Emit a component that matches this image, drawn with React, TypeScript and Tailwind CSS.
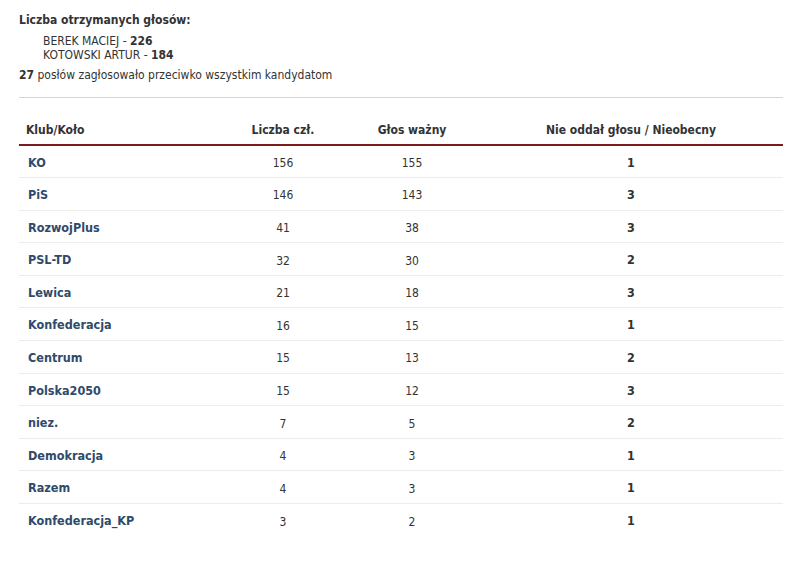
const rows = [
  { club: "KO", members: 156, valid: 155, absent: 1 },
  { club: "PiS", members: 146, valid: 143, absent: 3 },
  { club: "RozwojPlus", members: 41, valid: 38, absent: 3 },
  { club: "PSL-TD", members: 32, valid: 30, absent: 2 },
  { club: "Lewica", members: 21, valid: 18, absent: 3 },
  { club: "Konfederacja", members: 16, valid: 15, absent: 1 },
  { club: "Centrum", members: 15, valid: 13, absent: 2 },
  { club: "Polska2050", members: 15, valid: 12, absent: 3 },
  { club: "niez.", members: 7, valid: 5, absent: 2 },
  { club: "Demokracja", members: 4, valid: 3, absent: 1 },
  { club: "Razem", members: 4, valid: 3, absent: 1 },
  { club: "Konfederacja_KP", members: 3, valid: 2, absent: 1 },
];

export default function App() {
  return (
    <div className="bg-white min-h-[571px] px-[19px] pt-[12px] text-[12px] text-[#333] font-['DejaVu_Sans_Condensed','Liberation_Sans',sans-serif]">
      <div className="font-bold text-[12px] leading-[17px]">Liczba otrzymanych głosów:</div>
      <div className="pl-[24px] pt-[5px] leading-[14px]">
        <div>
          BEREK MACIEJ - <b>226</b>
        </div>
        <div>
          KOTOWSKI ARTUR - <b>184</b>
        </div>
      </div>
      <div className="pt-[6px] leading-[14px]">
        <b>27</b> posłów zagłosowało przeciwko wszystkim kandydatom
      </div>
      <div className="mt-[15px] w-[764px] border-t border-[#d4d4d4]" />
      <table className="mt-[14px] w-[764px] border-collapse">
        <thead>
          <tr className="border-b-2 border-[#7b1c1c] text-[12px] font-bold">
            <th className="w-[202px] h-[33px] pt-[4px] pl-[7px] text-left font-bold">Klub/Koło</th>
            <th className="w-[124px] pt-[4px] font-bold">Liczba czł.</th>
            <th className="w-[134px] pt-[4px] font-bold">Głos ważny</th>
            <th className="pt-[4px] font-bold">Nie oddał głosu / Nieobecny</th>
          </tr>
        </thead>
        <tbody>
          {rows.map((r) => (
            <tr key={r.club} className="border-b border-[#ececec] last:border-b-0">
              <td className="h-[32.6px] pt-[3px] pl-[9px] text-[12.5px] font-bold text-[#2f4a6b]">{r.club}</td>
              <td className="pt-[3px] text-center">{r.members}</td>
              <td className="pt-[3px] text-center">{r.valid}</td>
              <td className="pt-[3px] text-center text-[12.5px] font-bold">{r.absent}</td>
            </tr>
          ))}
        </tbody>
      </table>
    </div>
  );
}
